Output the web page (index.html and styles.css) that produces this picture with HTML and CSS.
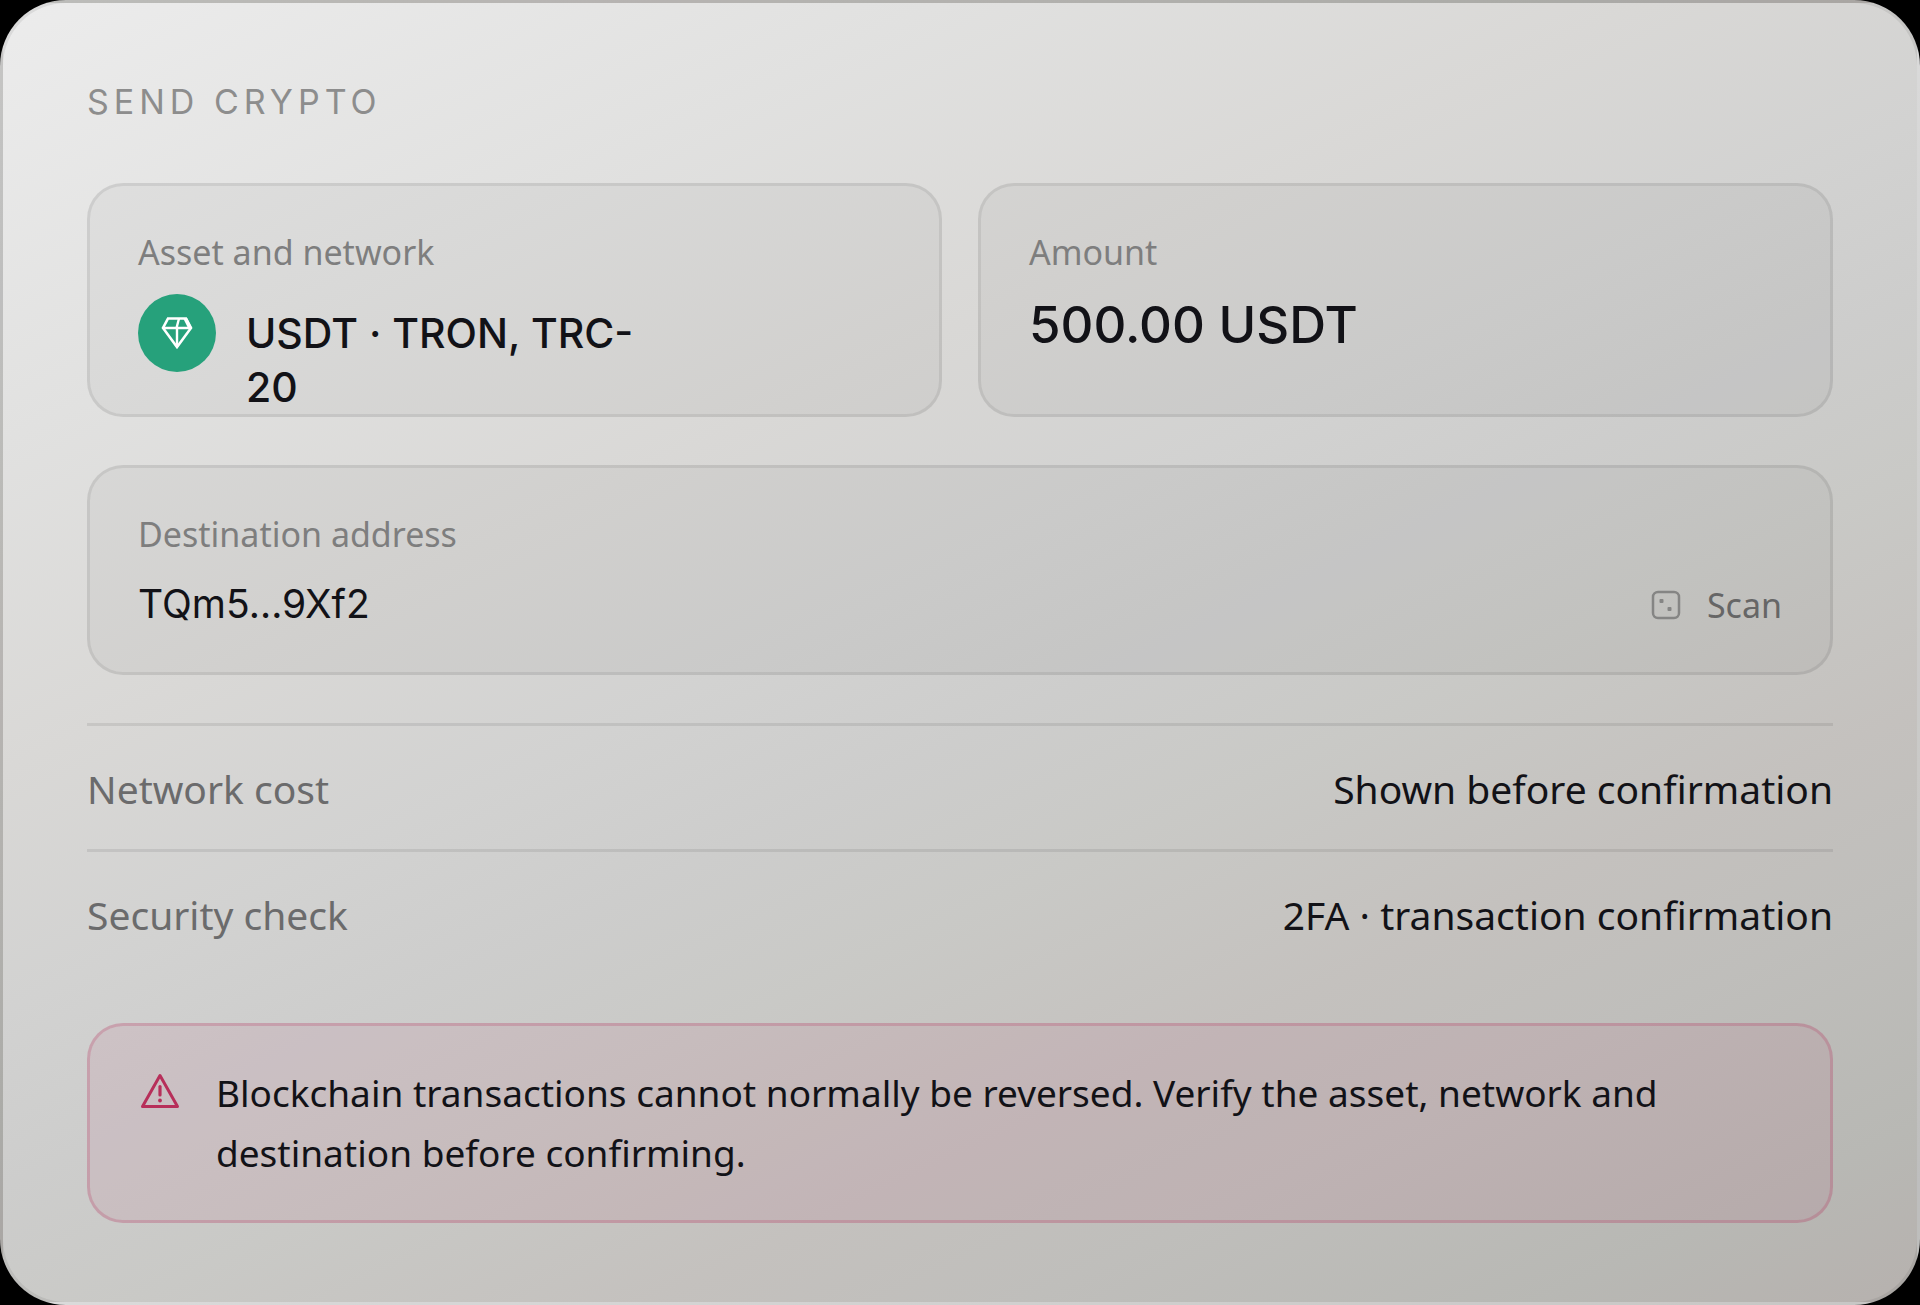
FILE: index.html
```html
<!DOCTYPE html>
<html lang="en">
<head>
<meta charset="utf-8">
<meta name="viewport" content="width=device-width, initial-scale=1">
<title>Send crypto</title>
<link rel="stylesheet" href="styles.css">
</head>
<body>
<main class="card">
  <h1 class="title">Send crypto</h1>
  <form class="form">
    <div class="pair">
      <div class="field field-short">
        <span class="label" id="asset-label">Asset and network</span>
        <button type="button" class="asset" aria-labelledby="asset-label asset-value">
          <span class="coin">
            <svg class="coin-icon" viewBox="0 0 32 34" aria-hidden="true">
              <path d="M7 2.500H25L30 12 16 31 2 12Z" fill="none" stroke="#fff" stroke-width="2.600"/>
              <path d="M2 12H30M16 12V31M18 2.500 15.500 12" fill="none" stroke="#fff" stroke-width="2.400"/>
              <path d="M22 2H26L31 12H27Z" fill="#fff"/>
            </svg>
          </span>
          <span class="asset-name" id="asset-value">USDT · TRON, TRC-20</span>
        </button>
      </div>
      <div class="field field-short">
        <label class="label" for="amount">Amount</label>
        <input class="input amount" id="amount" type="text" value="500.00 USDT">
      </div>
    </div>
    <div class="field">
      <label class="label" for="address">Destination address</label>
      <div class="address-row">
        <input class="input address" id="address" type="text" value="TQm5…9Xf2">
        <button type="button" class="scan">
          <svg class="scan-icon" viewBox="0 0 30 30" aria-hidden="true">
            <rect x="2" y="2" width="26" height="26" rx="5" fill="none" stroke="currentColor" stroke-width="2.500"/>
            <rect x="8.500" y="9" width="4" height="4" rx="1" fill="currentColor"/>
            <rect x="16.500" y="17" width="4" height="4" rx="1" fill="currentColor"/>
          </svg>
          Scan
        </button>
      </div>
    </div>
  </form>
  <dl class="details">
    <div class="detail"><dt>Network cost</dt><dd>Shown before confirmation</dd></div>
    <div class="detail"><dt>Security check</dt><dd>2FA · transaction confirmation</dd></div>
  </dl>
  <div class="warning" role="note">
    <svg class="warning-icon" viewBox="-1 0 42 42" aria-hidden="true">
      <path d="M21 5.500 38.500 36.500H3.500Z" fill="none" stroke="currentColor" stroke-width="3" stroke-linejoin="round"/>
      <path d="M21 16.500V25" stroke="currentColor" stroke-width="3.200" stroke-linecap="round"/>
      <circle cx="21" cy="30.500" r="1.900" fill="currentColor"/>
    </svg>
    <p class="warning-text">Blockchain transactions cannot normally be reversed. Verify the asset, network and destination before confirming.</p>
  </div>
</main>
</body>
</html>
```

FILE: styles.css
```css
* {
  box-sizing: border-box;
}

body {
  margin: 0;
  background: #000;
  color: #121217;
  font-family: "Noto Sans", sans-serif;
}

h1, p, dl, dd {
  margin: 0;
}

button, input {
  margin: 0;
  padding: 0;
  border: 0;
  background: none;
  color: inherit;
  font: inherit;
  text-align: left;
}

.card {
  min-height: 100vh;
  padding: 78px 84px;
  border: 3px solid rgba(20, 20, 25, 0.08);
  border-radius: 66px;
  background: linear-gradient(155deg, #ececec 0%, #e1e1e0 20%, #d9d8d6 35%, #d2d2d1 46%, #cdcdcc 54%, #c9c9c6 62%, #c4c1be 73%, #bfbebb 81%, #b8b8b4 92%, #b6b1ae 100%);
}

.title {
  margin-bottom: 60px;
  color: #8d8d8d;
  font: 400 34px/42px Inter, sans-serif;
  letter-spacing: 5px;
  text-transform: uppercase;
}

.form {
  display: grid;
  gap: 48px;
}

.pair {
  display: grid;
  grid-template-columns: 1fr 1fr;
  gap: 36px;
}

.field {
  padding: 42px 48px;
  border: 3px solid rgba(20, 20, 25, 0.08);
  border-radius: 36px;
  background: rgba(20, 20, 25, 0.04);
}

.field-short {
  height: 234px;
}

.label {
  display: block;
  color: #7e7e7e;
  font-size: 34px;
  line-height: 48px;
}

.asset {
  display: flex;
  align-items: flex-start;
  gap: 30px;
  margin-top: 18px;
}

.coin {
  display: flex;
  flex: none;
  align-items: center;
  justify-content: center;
  width: 78px;
  height: 78px;
  border-radius: 50%;
  background: #26a17b;
}

.coin-icon {
  width: 32px;
  height: 34px;
}

.asset-name {
  max-width: 420px;
  margin-top: 12px;
  font: 500 41px/54px Inter, sans-serif;
}

.input {
  display: block;
  width: 100%;
  min-width: 0;
  outline: none;
  font-family: Inter, sans-serif;
}

.amount {
  height: 60px;
  margin-top: 18px;
  font-size: 51px;
  font-weight: 500;
}

.address-row {
  display: flex;
  align-items: center;
  gap: 24px;
  margin-top: 18px;
}

.address {
  flex: 1;
  height: 54px;
  font-size: 39px;
}

.scan {
  display: flex;
  align-items: center;
  gap: 26px;
  padding-top: 4px;
  color: #666;
  font-size: 34px;
  line-height: 50px;
}

.scan-icon {
  width: 30px;
  height: 30px;
  color: #858584;
}

.details {
  margin: 48px 0;
}

.detail {
  display: flex;
  justify-content: space-between;
  padding: 37px 0 35px;
  border-top: 3px solid rgba(20, 20, 25, 0.09);
  font-size: 39px;
  line-height: 51px;
}

.detail dt {
  color: #6b6b6c;
}

.warning {
  display: flex;
  gap: 36px;
  padding: 37px 48px;
  border: 3px solid rgba(184, 40, 85, 0.22);
  border-radius: 36px;
  background: rgba(184, 40, 85, 0.08);
}

.warning-icon {
  flex: none;
  width: 42px;
  height: 42px;
  margin-top: 7px;
  color: #b72f5a;
}

.warning-text {
  font-size: 37px;
  line-height: 60px;
}
```
